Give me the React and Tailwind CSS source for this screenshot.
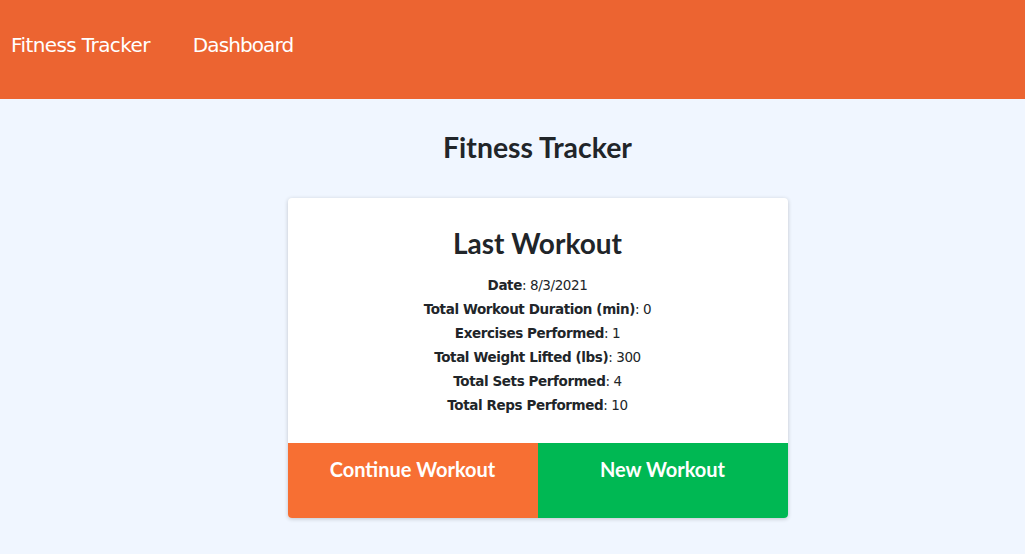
export default function App() {
  const rows = [
    ["Date", "8/3/2021"],
    ["Total Workout Duration (min)", "0"],
    ["Exercises Performed", "1"],
    ["Total Weight Lifted (lbs)", "300"],
    ["Total Sets Performed", "4"],
    ["Total Reps Performed", "10"],
  ];
  return (
    <div className="min-h-[554px] bg-[#f0f6ff]">
      <header className="h-[99px] bg-[#ec6431] flex items-center pb-[10px] pl-[11px] gap-[43px] text-white text-[20px] font-['DejaVu_Sans',sans-serif] tracking-[-0.6px]">
        <span>Fitness Tracker</span>
        <span className="tracking-[-0.9px]">Dashboard</span>
      </header>
      <main className="flex flex-col items-center pl-[50px]">
        <h1 className="mt-[29px] text-[28.4px] leading-[38px] font-bold text-[#212529] font-['Lato',sans-serif]">Fitness Tracker</h1>
        <div className="mt-[32px] w-[500px] bg-white rounded-[4px] shadow-[0_1px_4px_rgba(0,0,0,0.2)] overflow-hidden">
          <div className="pt-[27px] pb-[26px] flex flex-col items-center text-[#212529]">
            <h2 className="text-[28px] leading-[36px] font-bold font-['Lato',sans-serif]">Last Workout</h2>
            <div className="mt-[12px] flex flex-col items-center font-['DejaVu_Sans',sans-serif] text-[13.5px] leading-[24px] tracking-[-0.4px]">
              {rows.map(([k, v]) => (
                <div key={k}><span className="font-bold">{k}</span>: {v}</div>
              ))}
            </div>
          </div>
          <div className="flex h-[75px] font-['Lato',sans-serif] font-bold text-white text-[20px]">
            <button className="flex-1 bg-[#f76f33] pt-[11px] flex justify-center items-start">Continue Workout</button>
            <button className="flex-1 bg-[#00b853] pt-[11px] flex justify-center items-start">New Workout</button>
          </div>
        </div>
      </main>
    </div>
  );
}
